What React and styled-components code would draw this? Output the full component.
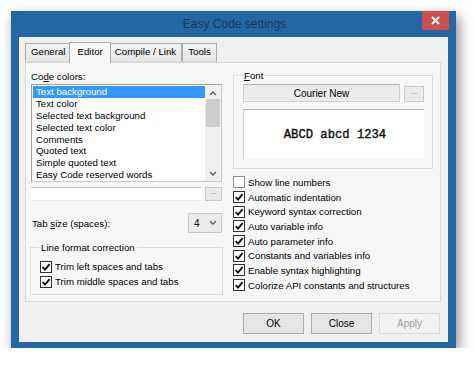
import React from 'react';
import styled, { createGlobalStyle } from 'styled-components';

const GlobalStyle = createGlobalStyle`
    body {
        margin: 0;
        background: #ffffff;
        font-family: 'Liberation Sans', Arial, sans-serif;
        font-size: 9.7px;
        color: #000;
    }
`;

const codeColors = [
    'Text background',
    'Text color',
    'Selected text background',
    'Selected text color',
    'Comments',
    'Quoted text',
    'Simple quoted text',
    'Easy Code reserved words',
];

const options = [
    ['Show line numbers', false],
    ['Automatic indentation', true],
    ['Keyword syntax correction', true],
    ['Auto variable info', true],
    ['Auto parameter info', true],
    ['Constants and variables info', true],
    ['Enable syntax highlighting', true],
    ['Colorize API constants and structures', true],
];

const Check = ({ checked }) => (
    <Box checked={checked}>
        {checked && (
            <svg width="10" height="10" viewBox="0 0 10 10">
                <path d="M1.6 5.2 L4 7.6 L8.6 2.2" fill="none" stroke="#111" strokeWidth="1.9" />
            </svg>
        )}
    </Box>
);

const Chevron = ({ up }) => (
    <svg width="8" height="6" viewBox="0 0 8 6">
        <path d={up ? 'M1 5 L4 2 L7 5' : 'M1 1 L4 4 L7 1'} fill="none" stroke="#606060" strokeWidth="1.4" />
    </svg>
);

export const App = () => (
    <Page>
        <GlobalStyle />
        <Window>
            <TitleBar>
                <span />
                <Title>Easy Code settings</Title>
                <CloseButton>
                    <svg width="9" height="9" viewBox="0 0 9 9">
                        <path d="M1 1 L8 8 M8 1 L1 8" stroke="#fff" strokeWidth="2" />
                    </svg>
                </CloseButton>
            </TitleBar>
            <Client>
                <TabStrip>
                    <Tab>General</Tab>
                    <Tab active>Editor</Tab>
                    <Tab>Compile / Link</Tab>
                    <Tab>Tools</Tab>
                </TabStrip>
                <Panel>
                    <Column>
                        <Label>
                            Co<u>d</u>e colors:
                        </Label>
                        <ListBox>
                            <Items>
                                {codeColors.map((c, i) => (
                                    <Item key={c} selected={i === 0}>
                                        {c}
                                    </Item>
                                ))}
                            </Items>
                            <ScrollBar>
                                <Chevron up />
                                <Thumb />
                                <Chevron />
                            </ScrollBar>
                        </ListBox>
                        <InputRow>
                            <TextInput />
                            <DotsButton>...</DotsButton>
                        </InputRow>
                        <TabSizeRow>
                            <span>
                                Tab <u>s</u>ize (spaces):
                            </span>
                            <Combo>
                                <span>4</span>
                                <Chevron />
                            </Combo>
                        </TabSizeRow>
                        <LineGroup>
                            <Legend>Line format correction</Legend>
                            <CheckRow>
                                <Check checked />
                                Trim left spaces and tabs
                            </CheckRow>
                            <CheckRow>
                                <Check checked />
                                Trim middle spaces and tabs
                            </CheckRow>
                        </LineGroup>
                    </Column>
                    <Column>
                        <FontGroup>
                            <FontLegend>
                                <u>F</u>ont
                            </FontLegend>
                            <FontRow>
                                <FontName>Courier New</FontName>
                                <SmallDots>...</SmallDots>
                            </FontRow>
                            <Preview>ABCD abcd 1234</Preview>
                        </FontGroup>
                        <Options>
                            {options.map(([text, on]) => (
                                <OptionRow key={text}>
                                    <Check checked={on} />
                                    {text}
                                </OptionRow>
                            ))}
                        </Options>
                    </Column>
                </Panel>
                <ButtonRow>
                    <Button>OK</Button>
                    <Button>Close</Button>
                    <Button disabled>Apply</Button>
                </ButtonRow>
            </Client>
        </Window>
    </Page>
);
export default App;

const Page = styled.div`
    padding: 11px 0 0 11px;
`;
const Window = styled.div`
    width: 445px;
    height: 337px;
    background: #2567a4;
    display: flex;
    flex-direction: column;
    box-shadow: 3px 5px 12px rgba(0, 0, 0, 0.45);
`;
const TitleBar = styled.div`
    height: 26px;
    display: grid;
    grid-template-columns: 1fr auto 1fr;
    align-items: start;
`;
const Title = styled.div`
    font-size: 12px;
    line-height: 26px;
    color: #17375a;
    padding-left: 2px;
`;
const CloseButton = styled.div`
    justify-self: end;
    margin-right: 7px;
    width: 27px;
    height: 19px;
    background: #c8504e;
    display: flex;
    align-items: center;
    justify-content: center;
`;
const Client = styled.div`
    flex: 1;
    margin: 0 8px 6px 8px;
    background: #f0f0f0;
    padding: 6px 7px 0 6px;
    display: flex;
    flex-direction: column;
`;
const TabStrip = styled.div`
    display: flex;
    align-items: flex-end;
    height: 19px;
    position: relative;
    z-index: 1;
`;
const Tab = styled.div`
    height: ${(p) => (p.active ? '20px' : '17px')};
    margin: ${(p) => (p.active ? '0 -2px -1px -2px' : '0')};
    padding: 0 ${(p) => (p.active ? '7px' : '5px')};
    border: 1px solid #acacac;
    border-bottom: ${(p) => (p.active ? 'none' : '1px solid #d9d9d9')};
    background: ${(p) => (p.active ? '#f7f7f7' : 'linear-gradient(#f2f2f2, #e6e6e6)')};
    line-height: ${(p) => (p.active ? '17px' : '16px')};
    z-index: ${(p) => (p.active ? 2 : 1)};
    & + & {
        border-left: ${(p) => (p.active ? '1px solid #acacac' : 'none')};
    }
`;
const Panel = styled.div`
    height: 240px;
    box-sizing: border-box;
    border: 1px solid #d9d9d9;
    background: #f7f7f7;
    display: grid;
    grid-template-columns: 191px 200px;
    column-gap: 11px;
    padding: 7px 0 0 5px;
    align-items: start;
`;
const Column = styled.div`
    display: flex;
    flex-direction: column;
`;
const Label = styled.div`
    height: 13px;
    line-height: 13px;
    margin-bottom: 1px;
`;
const ListBox = styled.div`
    height: 98px;
    box-sizing: border-box;
    border: 1px solid #a0a0a0;
    border-right-color: #c8c8c8;
    border-bottom-color: #c8c8c8;
    background: #fff;
    display: flex;
`;
const Items = styled.div`
    flex: 1;
    padding: 1.4px 0 0 1px;
`;
const Item = styled.div`
    height: 11.8px;
    line-height: 11.8px;
    padding-left: 3px;
    background: ${(p) => (p.selected ? '#3399ff' : 'transparent')};
    color: ${(p) => (p.selected ? '#fff' : '#000')};
`;
const ScrollBar = styled.div`
    width: 16px;
    background: #f0f0f0;
    display: flex;
    flex-direction: column;
    align-items: center;
    padding: 5px 0 4px;
    svg {
        flex: none;
    }
`;
const Thumb = styled.div`
    width: 14px;
    height: 28px;
    margin: 3px 0 auto;
    background: #cdcdcd;
`;
const InputRow = styled.div`
    display: flex;
    justify-content: space-between;
    margin-top: 5px;
    height: 14px;
`;
const TextInput = styled.div`
    width: 170px;
    background: #fff;
    border-top: 1px solid #c0c0c0;
    border-bottom: 1px solid #ececec;
    box-sizing: border-box;
`;
const DotsButton = styled.div`
    width: 17px;
    box-sizing: border-box;
    border: 1px solid #c9c9c9;
    background: #eaeaea;
    color: #7a7a7a;
    font-size: 8px;
    line-height: 8px;
    text-align: center;
`;
const TabSizeRow = styled.div`
    display: flex;
    justify-content: space-between;
    align-items: center;
    margin-top: 12px;
    height: 20px;
    padding-left: 1px;
`;
const Combo = styled.div`
    width: 34px;
    height: 20px;
    box-sizing: border-box;
    border: 1px solid #c6c6c6;
    background: #ececec;
    display: flex;
    align-items: center;
    justify-content: space-between;
    padding: 0 4px 0 5px;
    span {
        font-size: 10px;
    }
`;
const LineGroup = styled.fieldset`
    margin: 8px 0 0 -1px;
    width: 193px;
    box-sizing: border-box;
    border: 1px solid #dcdcdc;
    padding: 5px 0 5px 9px;
`;
const Legend = styled.legend`
    padding: 0 2px;
    margin-left: -1px;
    line-height: 13px;
`;
const CheckRow = styled.div`
    display: flex;
    align-items: center;
    gap: 3px;
    height: 15px;
`;
const Box = styled.div`
    width: 12px;
    height: 12px;
    box-sizing: border-box;
    border: 1px solid ${(p) => (p.checked ? '#333' : '#8f8f8f')};
    background: #fff;
    display: flex;
    align-items: center;
    justify-content: center;
    flex: none;
`;
const FontGroup = styled.fieldset`
    margin: -1px 0 0 0;
    width: 200px;
    box-sizing: border-box;
    border: 1px solid #dcdcdc;
    padding: 2px 8px 9px 9px;
`;
const FontLegend = styled.legend`
    padding: 0 1px;
    line-height: 13px;
`;
const FontRow = styled.div`
    display: flex;
    align-items: flex-end;
    justify-content: space-between;
    height: 18px;
`;
const FontName = styled.div`
    width: 157px;
    height: 18px;
    box-sizing: border-box;
    border: 1px solid #d0d0d0;
    border-top-color: #b4b4b4;
    background: #ececec;
    text-align: center;
    line-height: 17px;
    font-size: 10px;
`;
const SmallDots = styled(DotsButton)`
    width: 20px;
    height: 16px;
    line-height: 9px;
`;
const Preview = styled.div`
    margin-top: 7px;
    height: 50px;
    box-sizing: border-box;
    background: #fff;
    border-top: 1px solid #b4b4b4;
    border-left: 1px solid #d4d4d4;
    font-family: 'Liberation Mono', 'Courier New', monospace;
    font-size: 12.2px;
    color: #111;
    -webkit-text-stroke: 0.4px #111;
    display: flex;
    align-items: center;
    justify-content: center;
    padding-left: 2px;
`;
const Options = styled.div`
    margin-top: 6px;
    display: flex;
    flex-direction: column;
`;
const OptionRow = styled(CheckRow)`
    height: 14.7px;
`;
const ButtonRow = styled.div`
    display: flex;
    justify-content: flex-end;
    gap: 7px;
    margin-top: 11px;
    padding-right: 1px;
`;
const Button = styled.div`
    width: 61px;
    height: 21px;
    box-sizing: border-box;
    border: 1px solid ${(p) => (p.disabled ? '#d9d9d9' : '#adadad')};
    background: ${(p) => (p.disabled ? '#f2f2f2' : '#e5e5e5')};
    color: ${(p) => (p.disabled ? '#a0a0a0' : '#000')};
    font-size: 10px;
    line-height: 19px;
    text-align: center;
`;
